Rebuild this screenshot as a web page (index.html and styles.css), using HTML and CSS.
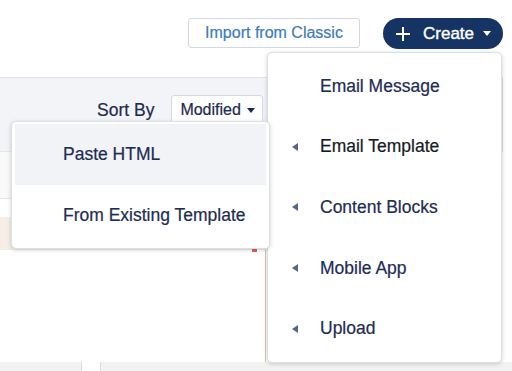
FILE: index.html
```html
<!DOCTYPE html>
<html lang="en">
<head>
  <meta charset="UTF-8">
  <meta name="viewport" content="width=device-width, initial-scale=1.0">
  <title>Templates</title>
  <link rel="stylesheet" href="styles.css">
</head>
<body>
  <div class="page">
    <!-- top actions -->
    <div class="topbar">
      <button class="btn-import">Import from Classic</button>
      <button class="btn-create">
        <svg class="plus" width="16" height="16" viewBox="0 0 16 16"><path d="M8 1v14M1 8h14" stroke="#fff" stroke-width="2" fill="none"/></svg>
        <span>Create</span>
        <svg width="8" height="5" viewBox="0 0 8 5"><path d="M0 0h8L4 5z" fill="#fff"/></svg>
      </button>
    </div>

    <div class="band">
      <div class="toolbar">
        <span class="sort-label">Sort By</span>
        <button class="btn-sort">Modified
          <svg width="8" height="5" viewBox="0 0 8 5"><path d="M0 0h8L4 5z" fill="#1b2a4e"/></svg>
        </button>
      </div>
    </div>
    <div class="subbar"></div>
    <div class="spacer"></div>

    <div class="grid">
      <div class="tile">
        <div class="thumb"></div>
        <div class="card"><span class="mark"></span></div>
      </div>
    </div>
    <div class="footer-strip">
      <div class="fs-a"></div>
      <div class="fs-b"></div>
      <div class="fs-c"></div>
    </div>

    <!-- Create dropdown -->
    <div class="create-menu">
      <div class="item"><span class="caret hidden"></span>Email Message</div>
      <div class="item dark"><span class="caret"></span>Email Template</div>
      <div class="item"><span class="caret"></span>Content Blocks</div>
      <div class="item"><span class="caret"></span>Mobile App</div>
      <div class="item"><span class="caret"></span>Upload</div>
    </div>

    <!-- Email Template submenu -->
    <div class="sub-menu">
      <div class="sub-item active">Paste HTML</div>
      <div class="sub-item">From Existing Template</div>
    </div>
  </div>
</body>
</html>
```

FILE: styles.css
```css
body {
  margin: 0;
  font-family: "Liberation Sans", Arial, sans-serif;
  color: #1b2a4e;
  background: #fff;
}

.page {
  position: relative;
  width: 512px;
  height: 371px;
  overflow: hidden;
}

button {
  font-family: inherit;
  cursor: pointer;
}

.topbar {
  height: 77px;
  display: flex;
  justify-content: flex-end;
  align-items: flex-start;
  gap: 23px;
  padding: 18px 9px 0 0;
  box-sizing: border-box;
}

.btn-import {
  width: 172px;
  height: 30px;
  background: #fff;
  border: 1px solid #d3d9e2;
  border-radius: 3px;
  color: #3d7bbd;
  font-size: 16px;
  padding: 0;
  -webkit-text-stroke: 0.2px #3d7bbd;
}

.btn-create {
  width: 120px;
  height: 31px;
  display: flex;
  align-items: center;
  padding: 0 0 0 12px;
  background: #163463;
  border: none;
  border-radius: 16px;
  color: #fff;
  font-size: 17px;
  -webkit-text-stroke: 0.4px #fff;
}

.btn-create .plus {
  margin-right: 12px;
}

.btn-create span {
  margin-right: 9px;
}

.band {
  height: 74px;
  background: #f3f4f7;
  border-top: 1px solid #dde1e8;
  border-right: 1px solid #dde1e8;
  width: 503px;
  box-sizing: border-box;
}

.toolbar {
  display: flex;
  align-items: center;
  gap: 17px;
  padding: 17px 0 0 97px;
}

.sort-label {
  font-size: 17.5px;
  -webkit-text-stroke: 0.2px #1b2a4e;
}

.btn-sort {
  height: 30px;
  width: 92px;
  display: flex;
  align-items: center;
  gap: 6px;
  padding: 0 0 0 8px;
  background: #fff;
  border: 1px solid #d5d9e0;
  border-radius: 3px;
  color: #1b2a4e;
  font-size: 16px;
  -webkit-text-stroke: 0.2px #1b2a4e;
}

.subbar {
  height: 46px;
  background: #f9f9fa;
  border-top: 1px solid #e3e5ea;
  border-bottom: 1px solid #e3e5ea;
  width: 503px;
}

.spacer {
  height: 18px;
}

.grid {
  display: flex;
  height: 145px;
}

.tile {
  width: 266px;
  display: flex;
  flex-direction: column;
}

.thumb {
  height: 33px;
  background: #f4eee6;
  border-right: 1px solid #e8e2d8;
}

.card {
  position: relative;
  flex: 1;
  background: #fff;
  border-right: 1px solid #d8c9a8;
}

.mark {
  position: absolute;
  right: 8px;
  top: -1px;
  width: 5px;
  height: 3px;
  background: #e85a5a;
}

.footer-strip {
  display: flex;
  height: 10px;
}

.fs-a {
  width: 81px;
  background: #f2f2f2;
  border-right: 1px solid #dcdcdc;
}

.fs-b {
  width: 18px;
  background: #fff;
  border-right: 1px solid #dcdcdc;
}

.fs-c {
  flex: 1;
  background: #f2f2f2;
}

.create-menu {
  position: absolute;
  top: 52px;
  left: 267px;
  width: 235px;
  height: 311px;
  box-sizing: border-box;
  padding: 3px;
  background: #fff;
  border: 1px solid #dcdfe5;
  border-radius: 5px;
  box-shadow: 0 1px 4px rgba(0, 0, 0, 0.18);
  z-index: 1;
}

.item {
  height: 60.6px;
  display: flex;
  align-items: center;
  padding-left: 21px;
  font-size: 17.5px;
  color: #1d2c52;
  -webkit-text-stroke: 0.2px #1d2c52;
}

.item.dark {
  color: #161a24;
  -webkit-text-stroke: 0.2px #161a24;
}

.caret {
  width: 0;
  height: 0;
  border-top: 4.5px solid transparent;
  border-bottom: 4.5px solid transparent;
  border-right: 6px solid #56658a;
  margin-right: 22px;
}

.caret.hidden {
  visibility: hidden;
}

.sub-menu {
  position: absolute;
  top: 121px;
  left: 11px;
  width: 259px;
  height: 128px;
  box-sizing: border-box;
  padding: 2px 3px;
  background: #fff;
  border: 1px solid #dcdfe5;
  border-radius: 5px;
  box-shadow: 0 1px 4px rgba(0, 0, 0, 0.18);
  z-index: 2;
}

.sub-item {
  height: 61px;
  display: flex;
  align-items: center;
  padding-left: 48px;
  font-size: 17.5px;
  color: #1d2c52;
  -webkit-text-stroke: 0.2px #1d2c52;
}

.sub-item.active {
  background: #f2f3f7;
}
```
